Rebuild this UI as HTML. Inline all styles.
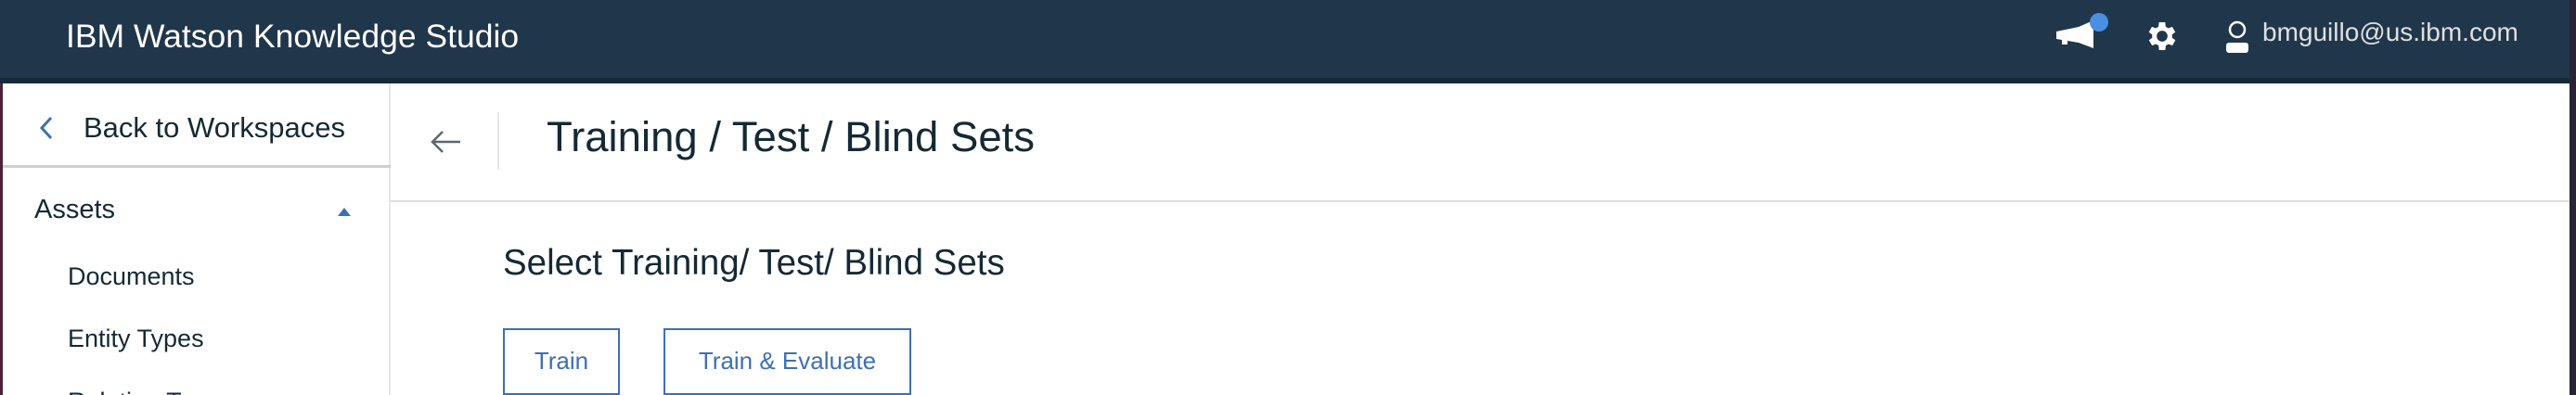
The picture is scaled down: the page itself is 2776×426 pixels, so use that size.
<!DOCTYPE html>
<html><head><meta charset="utf-8"><style>
*{margin:0;padding:0;box-sizing:border-box}
html{width:2776px;height:426px;overflow:hidden}
body{width:2776px;height:426px;overflow:hidden;background:#fff;font-family:"Liberation Sans",sans-serif;position:relative}
.hdr{position:absolute;left:0;top:0;width:2776px;height:84px;background:#20364b}
.strip{position:absolute;left:0;top:84px;width:2776px;height:6px;background:#162a38}
.abs{position:absolute;white-space:nowrap}
.edgeL{position:absolute;left:0;top:90px;width:3px;height:336px;background:#4a2338}
.edgeR{position:absolute;right:0;top:0;width:7px;height:426px;background:#2a2235}
.side{position:absolute;left:3px;top:90px;width:418px;height:336px;border-right:2px solid #e6e6e6;overflow:hidden}
</style></head><body>
<div class="hdr"></div><div class="strip"></div>
<div class="abs" style="left:71px;top:19px;font-size:35.5px;color:#fff;font-weight:300">IBM <b>Watson</b> Knowledge Studio</div>
<svg class="abs" style="left:2214px;top:14px" width="64" height="42" viewBox="0 0 64 42">
<path d="M2 20 L26 15 L42 8 L42 38 L26 32 L14 30 L14 34 L8 34 L8 29 L2 28 Z" fill="#fff"/>
<circle cx="48" cy="10" r="10" fill="#4a90e2"/></svg>
<svg class="abs" style="left:2310px;top:19px" width="40" height="40" viewBox="0 0 24 24"><path fill="#fff" d="M19.4 13a7.5 7.5 0 000-2l2.1-1.6-2-3.5-2.5 1a7 7 0 00-1.7-1L15 3h-4l-.4 2.9a7 7 0 00-1.7 1l-2.5-1-2 3.5L6.6 11a7.5 7.5 0 000 2l-2.1 1.6 2 3.5 2.5-1a7 7 0 001.7 1L11 21h4l.4-2.9a7 7 0 001.7-1l2.5 1 2-3.5zM13 15.5a3.5 3.5 0 110-7 3.5 3.5 0 010 7z" transform="translate(-1 0)"/></svg>
<svg class="abs" style="left:2396px;top:22px" width="30" height="36" viewBox="0 0 30 36"><circle cx="15" cy="10" r="8" fill="none" stroke="#fff" stroke-width="2.5"/><rect x="3" y="24" width="24" height="11" rx="3" fill="#fff"/></svg>
<div class="abs" style="left:2438px;top:19px;font-size:28px;color:#e0e0e0">bmguillo@us.ibm.com</div>
<div class="edgeR"></div>
<div class="edgeL"></div>
<div class="side">
<div class="abs" style="left:70px;top:330px;font-size:27px;line-height:1;color:#152935">Relation Types</div>
</div>
<svg class="abs" style="left:40px;top:124px" width="18" height="28" viewBox="0 0 18 28"><path d="M15 3 L5 14 L15 25" fill="none" stroke="#3d70b2" stroke-width="3"/></svg>
<div class="abs" style="left:90px;top:120px;font-size:31px;color:#152935">Back to Workspaces</div>
<div class="abs" style="left:3px;top:178px;width:418px;height:3px;background:#d0d0d0"></div>
<div class="abs" style="left:37px;top:210px;font-size:29px;color:#152935">Assets</div>
<svg class="abs" style="left:364px;top:223px" width="14" height="10"><path d="M0 10 L7 1 L14 10Z" fill="#3d70b2"/></svg>
<div class="abs" style="left:73px;top:283px;font-size:27px;color:#152935">Documents</div>
<div class="abs" style="left:73px;top:350px;font-size:27px;color:#152935">Entity Types</div>
<svg class="abs" style="left:462px;top:138px" width="36" height="30" viewBox="0 0 36 30"><path d="M34 15 H4 M15 4 L4 15 L15 26" fill="none" stroke="#5a6872" stroke-width="2.5"/></svg>
<div class="abs" style="left:536px;top:121px;width:2px;height:62px;background:#e6e6e6"></div>
<div class="abs" style="left:589px;top:122px;font-size:45.5px;color:#152935;font-weight:300">Training / Test / Blind Sets</div>
<div class="abs" style="left:421px;top:216px;width:2348px;height:2px;background:#dfdfdf"></div>
<div class="abs" style="left:542px;top:262px;font-size:38.5px;color:#152935">Select Training/ Test/ Blind Sets</div>
<div class="abs" style="left:542px;top:354px;width:126px;height:72px;border:2px solid #3d70b2;color:#3d70b2;font-size:26px;text-align:center;line-height:66px">Train</div>
<div class="abs" style="left:715px;top:354px;width:267px;height:72px;border:2px solid #3d70b2;color:#3d70b2;font-size:26px;text-align:center;line-height:66px">Train &amp; Evaluate</div>
</body></html>
